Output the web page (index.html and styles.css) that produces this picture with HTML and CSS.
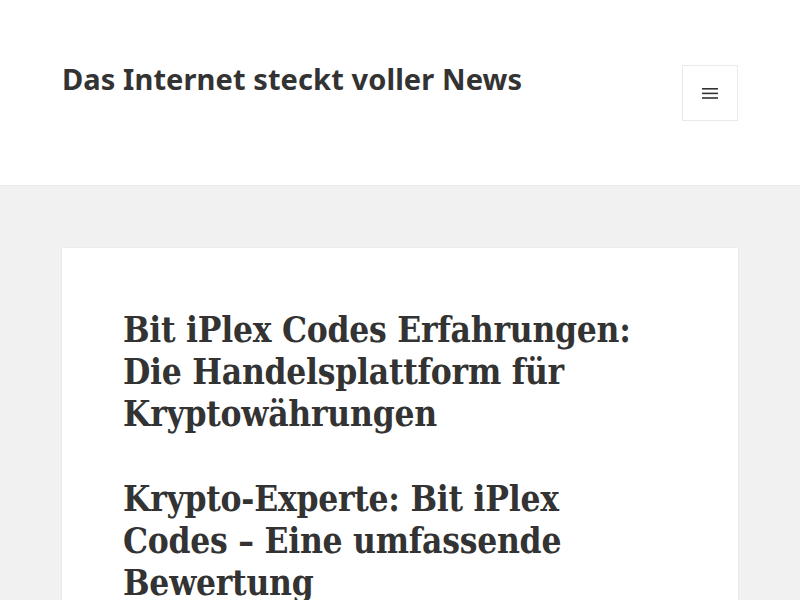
FILE: index.html
```html
<!DOCTYPE html>
<html lang="de">
<head>
<meta charset="utf-8">
<title>Das Internet steckt voller News</title>
<link rel="stylesheet" href="styles.css">
</head>
<body>
<header class="site-header">
  <div class="site-branding">
    <p class="site-title">Das Internet steckt voller News</p>
    <button class="secondary-toggle" aria-label="Menü und Widgets">
      <svg width="16" height="16" viewBox="0 0 16 16" aria-hidden="true">
        <rect x="0" y="3" width="16" height="1.6" fill="#333"/>
        <rect x="0" y="7.6" width="16" height="1.6" fill="#333"/>
        <rect x="0" y="12.2" width="16" height="1.6" fill="#333"/>
      </svg>
    </button>
  </div>
</header>
<main class="site-main">
  <article class="hentry">
    <div class="entry-content">
      <h1>Bit iPlex Codes Erfahrungen: Die Handelsplattform für Kryptowährungen</h1>
      <h1>Krypto-Experte: Bit iPlex Codes – Eine umfassende Bewertung</h1>
      <p>Bit iPlex Codes ist eine Handelsplattform für Kryptowährungen.</p>
    </div>
  </article>
</main>
</body>
</html>
```

FILE: styles.css
```css
* { box-sizing: border-box; }
html, body { margin: 0; padding: 0; }
body {
  background: #f1f1f1;
  color: #333;
  font-family: "Noto Sans", sans-serif;
}
.site-header {
  background: #fff;
  height: 185px;
  padding: 61px 62px 0;
  box-shadow: 0 0 1px rgba(0, 0, 0, 0.15);
  position: relative;
}
.site-branding {
  display: flex;
  justify-content: space-between;
  align-items: flex-start;
}
.site-title {
  margin: 0;
  font-family: "Noto Sans", sans-serif;
  font-weight: 700;
  font-size: 29px;
  line-height: 35px;
  letter-spacing: 0.1px;
  color: #333;
}
.secondary-toggle {
  width: 56px;
  height: 56px;
  margin-top: 4px;
  background: #fff;
  border: 1px solid #eaeaea;
  padding: 0;
  display: flex;
  align-items: center;
  justify-content: center;
}
.secondary-toggle svg { display: block; }
.site-main {
  padding: 63px 62px 0;
}
.hentry {
  background: #fff;
  box-shadow: 0 0 1px rgba(0, 0, 0, 0.15);
  padding: 61px 72px 60px 61px;
}
.entry-content h1 {
  font-family: "DejaVu Serif Condensed", "DejaVu Serif", serif;
  font-stretch: condensed;
  font-weight: 700;
  font-size: 35px;
  line-height: 42px;
  letter-spacing: -0.25px;
  margin: 0 0 43px;
  color: #333;
}
.entry-content p {
  font-family: "DejaVu Serif", serif;
  font-size: 19px;
  line-height: 1.6;
  margin: 0;
}
```
